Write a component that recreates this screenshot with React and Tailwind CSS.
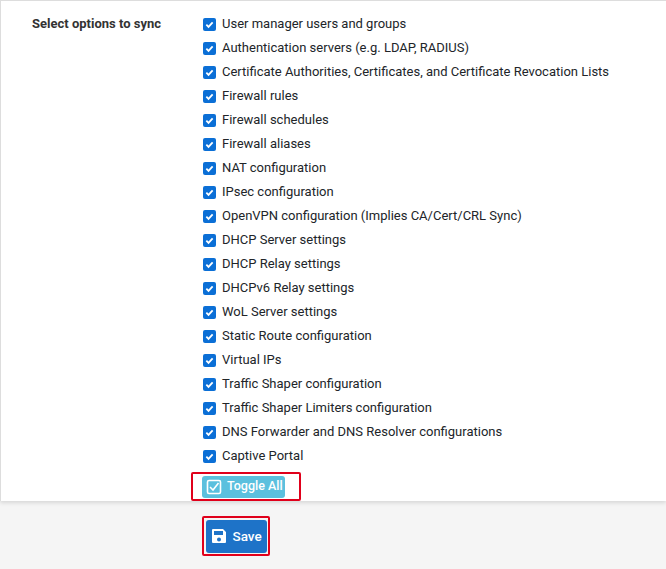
const OPTIONS = [
  'User manager users and groups',
  'Authentication servers (e.g. LDAP, RADIUS)',
  'Certificate Authorities, Certificates, and Certificate Revocation Lists',
  'Firewall rules',
  'Firewall schedules',
  'Firewall aliases',
  'NAT configuration',
  'IPsec configuration',
  'OpenVPN configuration (Implies CA/Cert/CRL Sync)',
  'DHCP Server settings',
  'DHCP Relay settings',
  'DHCPv6 Relay settings',
  'WoL Server settings',
  'Static Route configuration',
  'Virtual IPs',
  'Traffic Shaper configuration',
  'Traffic Shaper Limiters configuration',
  'DNS Forwarder and DNS Resolver configurations',
  'Captive Portal',
];

function Check() {
  return (
    <span className="w-[13px] h-[13px] rounded-[2px] bg-[#0b6fd6] flex items-center justify-center shrink-0">
      <svg width="9" height="9" viewBox="0 0 10 10" fill="none" stroke="white" strokeWidth="2"><path d="M1.5 5.2l2.4 2.4 4.6-5" /></svg>
    </span>
  );
}

export default function App() {
  return (
    <div className="w-[666px] h-[569px] bg-[#f5f5f5] overflow-hidden text-[13px] text-[#212529]" style={{ fontFamily: 'Roboto, sans-serif' }}>
      <div className="bg-white border-t border-l border-[#ddd] shadow-[0_2px_4px_rgba(0,0,0,0.12)] h-[501px] flex pt-[11px]">
        <div className="w-[170px] ml-[31px] font-bold text-[#333] leading-[24px]">Select options to sync</div>
        <div className="ml-[1px] flex flex-col">
          {OPTIONS.map((o) => (
            <div key={o} className="h-[24px] flex items-center gap-[6px]">
              <Check />
              <span>{o}</span>
            </div>
          ))}
          <div className="mt-[4px] -ml-[12px] w-[110px] h-[29px] border-2 border-[#e0001b] rounded-[2px] flex items-center pl-[9px]">
            <span className="h-[22px] w-[83px] bg-[#5bc0de] rounded-[3px] flex items-center gap-[5px] pl-[4px] text-white text-[12.5px] font-medium">
              <svg width="16" height="16" viewBox="0 0 16 16" fill="none" stroke="white" strokeWidth="1.6"><rect x="1.5" y="1.5" width="13" height="13" rx="1.5" /><path d="M4 8l3 3 5.5-7" /></svg>
              Toggle All
            </span>
          </div>
        </div>
      </div>
      <div className="ml-[202px] mt-[15px] w-[68px] h-[40px] border-2 border-[#e0001b] rounded-[2px] flex items-center justify-center">
        <span className="w-[61px] h-[33px] bg-[#1e73c8] rounded-[3px] flex items-center gap-[6px] pl-[5px] text-white font-medium text-[13.5px]">
          <svg width="16" height="16" viewBox="0 0 16 16" fill="white"><path d="M2 1h10l3 3v10a1 1 0 01-1 1H2a1 1 0 01-1-1V2a1 1 0 011-1zm1 2v4h9V3H3zm5 6.5a2 2 0 100 4 2 2 0 000-4z" fillRule="evenodd" /></svg>
          Save
        </span>
      </div>
    </div>
  );
}
